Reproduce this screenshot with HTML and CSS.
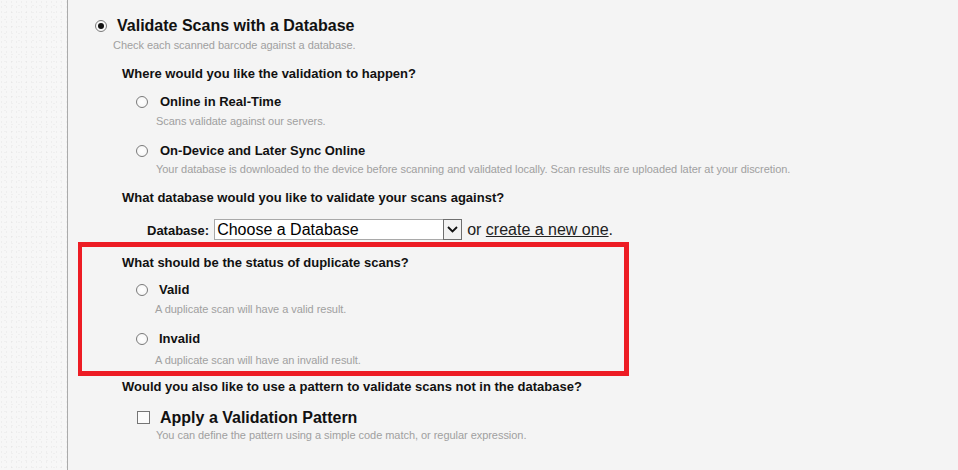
FILE: index.html
```html
<!DOCTYPE html>
<html lang="en">
<head>
<meta charset="utf-8">
<title>Validate Scans</title>
<link rel="stylesheet" href="styles.css">
</head>
<body>
<div class="page">
  <div class="gutter"></div>
  <main class="main">
    <div class="top-row">
      <input type="radio" class="radio" name="mode" checked>
      <span class="title">Validate Scans with a Database</span>
    </div>
    <div class="desc desc-top">Check each scanned barcode against a database.</div>

    <div class="question q-where">Where would you like the validation to happen?</div>
    <div class="opt opt-first">
      <input type="radio" class="radio" name="where">
      <span class="opt-label">Online in Real-Time</span>
    </div>
    <div class="desc desc-opt d1">Scans validate against our servers.</div>
    <div class="opt opt-second">
      <input type="radio" class="radio" name="where">
      <span class="opt-label">On-Device and Later Sync Online</span>
    </div>
    <div class="desc desc-opt d2">Your database is downloaded to the device before scanning and validated locally. Scan results are uploaded later at your discretion.</div>

    <div class="question q-db">What database would you like to validate your scans against?</div>
    <div class="db-row">
      <span class="db-label">Database:</span>
      <div class="select" role="combobox" aria-expanded="false">
        <span class="select-text">Choose a Database</span>
        <span class="select-btn">
          <svg width="11" height="7" viewBox="0 0 11 7"><path d="M1 1 L5.5 5.5 L10 1" fill="none" stroke="#111" stroke-width="1.8"/></svg>
        </span>
      </div>
      <span class="or">or <a href="#" class="link">create a new one</a>.</span>
    </div>

    <section class="dup-box">
      <div class="question q-dup">What should be the status of duplicate scans?</div>
      <div class="opt dup-opt dup-first">
        <input type="radio" class="radio" name="dup">
        <span class="opt-label">Valid</span>
      </div>
      <div class="desc dup-desc dd1">A duplicate scan will have a valid result.</div>
      <div class="opt dup-opt dup-second">
        <input type="radio" class="radio" name="dup">
        <span class="opt-label">Invalid</span>
      </div>
      <div class="desc dup-desc dd2">A duplicate scan will have an invalid result.</div>
    </section>

    <div class="question q-pattern">Would you also like to use a pattern to validate scans not in the database?</div>
    <div class="check-row">
      <input type="checkbox" class="check">
      <span class="check-label">Apply a Validation Pattern</span>
    </div>
    <div class="desc desc-check">You can define the pattern using a simple code match, or regular expression.</div>
  </main>
</div>
</body>
</html>
```
FILE: styles.css
```css
html, body {
  margin: 0;
  padding: 0;
}
body {
  background: #f4f4f4;
  font-family: "Liberation Sans", Arial, sans-serif;
  color: #111;
  overflow: hidden;
}
.page {
  display: flex;
  min-height: 470px;
}
.gutter {
  width: 67px;
  flex: none;
  background-color: #f7f7f7;
  background-image:
    radial-gradient(circle at 30% 40%, rgba(0,0,0,0.035) 0.6px, transparent 1px),
    radial-gradient(circle at 70% 80%, rgba(0,0,0,0.03) 0.6px, transparent 1px);
  background-size: 5px 5px, 7px 7px;
  border-right: 1px solid #ababab;
}
.main {
  flex: 1;
  padding-top: 15.5px;
}

/* radio & checkbox */
.radio {
  appearance: none;
  -webkit-appearance: none;
  width: 12px;
  height: 12px;
  margin: 0;
  border: 1px solid #7a7a7a;
  border-radius: 50%;
  background: radial-gradient(circle, #ffffff 0%, #f3f3f3 100%);
  box-sizing: border-box;
  flex: none;
  position: relative;
}
.radio:checked::after {
  content: "";
  position: absolute;
  left: 2px;
  top: 2px;
  width: 6px;
  height: 6px;
  border-radius: 50%;
  background: #111;
}
.check {
  appearance: none;
  -webkit-appearance: none;
  width: 13px;
  height: 13px;
  margin: 0;
  border: 1px solid #757575;
  background: #fbfbfb;
  box-sizing: border-box;
  flex: none;
}

/* top option */
.top-row {
  display: flex;
  align-items: center;
  gap: 10px;
  margin-left: 27px;
  height: 20px;
}
.title {
  font-size: 16px;
  font-weight: bold;
  line-height: 20px;
}
.desc {
  font-size: 11px;
  line-height: 14px;
  color: #a0a0a0;
  white-space: nowrap;
  letter-spacing: -0.045px;
}
.desc-top {
  margin-left: 45px;
  margin-top: 2.7px;
}
.question {
  font-size: 13px;
  font-weight: bold;
  line-height: 16px;
  margin-left: 54px;
  white-space: nowrap;
}
.q-where { margin-top: 14.3px; }

.opt {
  display: flex;
  align-items: center;
  gap: 12px;
  margin-left: 68px;
  height: 16px;
}
.opt-label {
  font-size: 13px;
  font-weight: bold;
  line-height: 16px;
}
.opt-first { margin-top: 12px; }
.desc-opt { margin-left: 88px; }
.d1 { margin-top: 4px; }
.opt-second { margin-top: 14.7px; }
.d2 { margin-top: 3px; }

.q-db { margin-top: 13.6px; }

/* database row */
.db-row {
  display: flex;
  align-items: baseline;
  margin-left: 79px;
  margin-top: 13.2px;
  height: 21px;
}
.db-label {
  font-size: 13px;
  font-weight: bold;
  margin-right: 5px;
}
.select {
  display: flex;
  width: 248px;
  height: 21px;
  box-sizing: border-box;
  border: 1px solid #a9a9a9;
  background: #fff;
}
.select-text {
  flex: 1;
  font-size: 16px;
  line-height: 19px;
  padding-left: 2px;
  color: #000;
}
.select-btn {
  width: 19px;
  height: 21px;
  margin: -1px -1px -1px 0;
  box-sizing: border-box;
  border: 1px solid #6e6e6e;
  background: #f2f2f2;
  display: flex;
  align-items: center;
  justify-content: center;
}
.or {
  font-size: 16px;
  color: #222;
  margin-left: 5px;
}
.link {
  color: #222;
  text-decoration: underline;
}

/* duplicate box */
.dup-box {
  margin-top: 2px;
  margin-left: 10px;
  width: 551px;
  box-sizing: border-box;
  border: 5px solid #ed1c24;
  border-left-width: 4px;
  padding: 7.8px 0 4.1px 0;
}
.dup-box .question { margin-left: 40px; }
.dup-opt {
  margin-left: 54px;
  gap: 11px;
}
.dup-first { margin-top: 11.7px; }
.dup-desc { margin-left: 73px; }
.dd1 { margin-top: 4px; }
.dup-second { margin-top: 15px; }
.dd2 { margin-top: 5.4px; }

.q-pattern { margin-top: 3.2px; }

.check-row {
  display: flex;
  align-items: center;
  gap: 10px;
  margin-left: 69px;
  margin-top: 12.6px;
  height: 20px;
}
.check-label {
  font-size: 16px;
  font-weight: bold;
  line-height: 20px;
}
.desc-check {
  margin-left: 88px;
  margin-top: 0.7px;
}
```
